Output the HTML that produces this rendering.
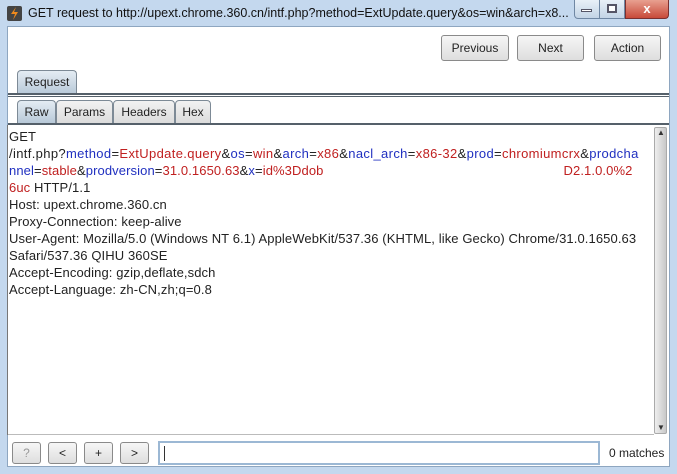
<!DOCTYPE html>
<html><head><meta charset="utf-8"><style>
*{margin:0;padding:0;box-sizing:border-box}
body{width:677px;height:474px;overflow:hidden;background:#c4d8ee;font-family:"Liberation Sans",sans-serif;font-size:12px;color:#222;position:relative}
.abs{position:absolute}
.title{left:28px;top:6px;font-size:12.5px;color:#111;white-space:nowrap}
.content{left:7px;top:26px;width:663px;height:441px;background:#fff;border:1px solid #8ea6c0}
.btn{position:absolute;border:1px solid #8a8a8a;border-radius:3px;background:linear-gradient(#f6f6f6,#dedede);text-align:center;font-size:12px;color:#222}
.tab{position:absolute;border:1px solid #7d8a96;border-bottom:none;border-radius:4px 4px 0 0;background:linear-gradient(#f2f2f2,#dcdcdc);text-align:center;font-size:12px;line-height:22px}
.tab.sel{background:linear-gradient(#e4ecf3,#b8c9d8)}
.txt{left:9px;top:128px;line-height:17px;font-size:13px;letter-spacing:0.1px;white-space:nowrap;color:#222}
.b{color:#2030c0}.r{color:#c02020}
</style></head><body>
<div class="abs" style="left:7px;top:6px;width:15px;height:15px;background:#444;border-radius:2px"></div>
<svg class="abs" style="left:7px;top:6px" width="15" height="15"><path d="M9 1 L4 8 L8 8 L6 14 L11 6 L7 6 Z" fill="#f08a1c"/></svg>
<div class="abs title">GET request to http://upext.chrome.360.cn/intf.php?method=ExtUpdate.query&amp;os=win&amp;arch=x8...</div>
<div class="abs" style="left:574px;top:0;width:26px;height:19px;border:1px solid #6f87a3;border-top:none;border-radius:0 0 0 4px;background:linear-gradient(#e8f0f8,#c3d4e6)"></div>
<div class="abs" style="left:581px;top:9px;width:11px;height:3px;background:#fff;border:1px solid #556"></div>
<div class="abs" style="left:600px;top:0;width:25px;height:19px;border:1px solid #6f87a3;border-top:none;border-left:none;background:linear-gradient(#e8f0f8,#c3d4e6)"></div>
<div class="abs" style="left:607px;top:4px;width:10px;height:9px;border:2px solid #556;background:#fff"></div>
<div class="abs" style="left:625px;top:0;width:44px;height:19px;border:1px solid #7a3030;border-top:none;border-radius:0 0 4px 0;background:linear-gradient(#e8a090,#c84a3a);color:#fff;font-weight:bold;text-align:center;font-size:13px;line-height:17px">x</div>
<div class="abs content"></div>
<div class="btn" style="left:441px;top:35px;width:68px;height:26px;line-height:24px">Previous</div>
<div class="btn" style="left:517px;top:35px;width:67px;height:26px;line-height:24px">Next</div>
<div class="btn" style="left:594px;top:35px;width:67px;height:26px;line-height:24px">Action</div>
<div class="tab sel" style="left:17px;top:70px;width:60px;height:24px">Request</div>
<div class="abs" style="left:8px;top:93px;width:661px;height:2px;background:#55606a"></div>
<div class="abs" style="left:8px;top:96px;width:661px;height:1px;background:#55606a"></div>
<div class="tab sel" style="left:17px;top:100px;width:39px;height:23px">Raw</div>
<div class="tab" style="left:56px;top:100px;width:57px;height:23px">Params</div>
<div class="tab" style="left:113px;top:100px;width:62px;height:23px">Headers</div>
<div class="tab" style="left:175px;top:100px;width:36px;height:23px">Hex</div>
<div class="abs" style="left:8px;top:123px;width:661px;height:2px;background:#55606a"></div>
<div class="abs" style="left:7px;top:125px;width:1px;height:310px;background:#777"></div>
<div class="abs" style="left:654px;top:127px;width:13px;height:307px;background:linear-gradient(90deg,#eee,#c8c8c8);border:1px solid #aaa;border-radius:2px"></div>
<div class="abs" style="left:657px;top:128px;font-size:8px;color:#333">▲</div>
<div class="abs" style="left:657px;top:423px;font-size:8px;color:#333">▼</div>
<div class="abs txt">GET<br><span style="letter-spacing:0.35px">/intf.php?<span class="b">method</span>=<span class="r">ExtUpdate.query</span>&amp;<span class="b">os</span>=<span class="r">win</span>&amp;<span class="b">arch</span>=<span class="r">x86</span>&amp;<span class="b">nacl_arch</span>=<span class="r">x86-32</span>&amp;<span class="b">prod</span>=<span class="r">chromiumcrx</span>&amp;<span class="b">prodcha</span></span><br><span class="b">nnel</span>=<span class="r">stable</span>&amp;<span class="b">prodversion</span>=<span class="r">31.0.1650.63</span>&amp;<span class="b">x</span>=<span class="r">id%3Ddob<span style="display:inline-block;width:240px"></span>D2.1.0.0%2</span><br><span class="r">6uc</span> HTTP/1.1<br>Host: upext.chrome.360.cn<br>Proxy-Connection: keep-alive<br>User-Agent: Mozilla/5.0 (Windows NT 6.1) AppleWebKit/537.36 (KHTML, like Gecko) Chrome/31.0.1650.63<br>Safari/537.36 QIHU 360SE<br>Accept-Encoding: gzip,deflate,sdch<br>Accept-Language: zh-CN,zh;q=0.8</div>
<div class="abs" style="left:8px;top:434px;width:646px;height:1px;background:#bbb"></div>
<div class="btn" style="left:12px;top:442px;width:29px;height:22px;line-height:20px;color:#999">?</div>
<div class="btn" style="left:48px;top:442px;width:29px;height:22px;line-height:20px">&lt;</div>
<div class="btn" style="left:84px;top:442px;width:29px;height:22px;line-height:20px">+</div>
<div class="btn" style="left:120px;top:442px;width:29px;height:22px;line-height:20px">&gt;</div>
<div class="abs" style="left:158px;top:441px;width:442px;height:24px;border:2px solid #9cb8d4;background:#fff"></div>
<div class="abs" style="left:164px;top:446px;width:1px;height:15px;background:#333"></div>
<div class="abs" style="left:609px;top:446px;font-size:12px">0 matches</div>
</body></html>
